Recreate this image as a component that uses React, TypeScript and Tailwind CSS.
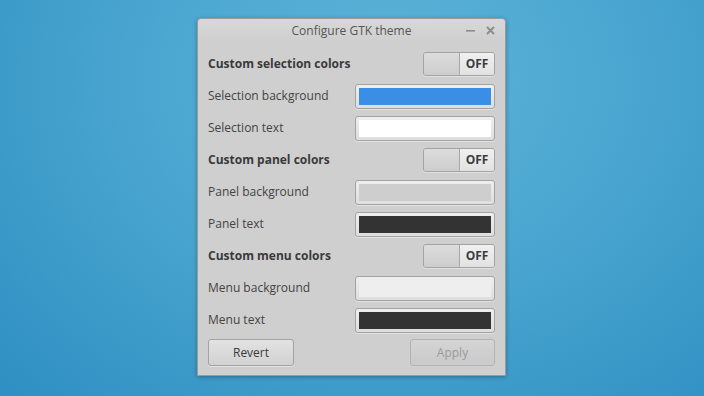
import React from "react";

type Row =
  | { kind: "toggle"; label: string }
  | { kind: "color"; label: string; color: string };

const rows: Row[] = [
  { kind: "toggle", label: "Custom selection colors" },
  { kind: "color", label: "Selection background", color: "bg-[#3a8ee6]" },
  { kind: "color", label: "Selection text", color: "bg-white" },
  { kind: "toggle", label: "Custom panel colors" },
  { kind: "color", label: "Panel background", color: "bg-[#cecece]" },
  { kind: "color", label: "Panel text", color: "bg-[#333333]" },
  { kind: "toggle", label: "Custom menu colors" },
  { kind: "color", label: "Menu background", color: "bg-[#eeeeee]" },
  { kind: "color", label: "Menu text", color: "bg-[#333333]" },
];

function Toggle() {
  return (
    <div className="flex h-6 w-[72px] overflow-hidden rounded-[3px] border border-[#a3a3a3] shadow-[0_1px_0_rgba(255,255,255,0.4)]">
      <div className="w-[36px] border-r border-[#a8a8a8] bg-gradient-to-b from-[#dcdcdc] to-[#cdcdcd]" />
      <div className="flex flex-1 items-center justify-center bg-gradient-to-b from-[#f0f0f0] to-[#e2e2e2] text-[12px] font-bold text-[#3c3c3c]">
        OFF
      </div>
    </div>
  );
}

function ColorButton({ color }: { color: string }) {
  return (
    <div className="h-[25px] w-[140px] rounded-[3px] border border-[#a3a3a3] bg-gradient-to-b from-[#eeeeee] to-[#dedede] p-[3px] shadow-[0_1px_0_rgba(255,255,255,0.4)]">
      <div className={`h-full w-full ${color}`} />
    </div>
  );
}

export default function App() {
  return (
    <div
      className="flex h-[396px] w-[704px] items-start justify-center bg-[radial-gradient(ellipse_at_55%_20%,#5db3d8_0%,#4aa6d0_45%,#2f8fc2_100%)] pt-[18px]"
      style={{ fontFamily: '"Open Sans", "Noto Sans", sans-serif' }}
    >
      <div className="ml-[-1px] flex h-[358px] w-[309px] flex-col rounded-t-[4px] border border-[#9a9a9a] bg-[#cfcfcf] shadow-[0_1px_4px_rgba(0,0,0,0.3)]">
        <div className="relative flex h-[23px] items-center justify-center rounded-t-[4px] bg-gradient-to-b from-[#d8d8d8] to-[#cfcfcf]">
          <span className="pt-[1px] text-[12px] text-[#555555]">Configure GTK theme</span>
          <div className="absolute right-[10px] top-[7px] flex items-center gap-[11px]">
            <svg width="9" height="9" viewBox="0 0 9 9">
              <rect x="0" y="4" width="9" height="1.6" fill="#8c8c8c" />
            </svg>
            <svg width="9" height="9" viewBox="0 0 9 9">
              <path d="M1 1 L8 8 M8 1 L1 8" stroke="#8c8c8c" strokeWidth="1.8" />
            </svg>
          </div>
        </div>
        <div className="flex flex-col pl-[10px] pr-[10px] pt-[6px]">
          {rows.map((r) => (
            <div key={r.label} className="flex h-8 items-center justify-between">
              {r.kind === "toggle" ? (
                <>
                  <span className="text-[12px] font-bold text-[#3a3a3a]">{r.label}</span>
                  <Toggle />
                </>
              ) : (
                <>
                  <span className="text-[12px] text-[#444444]">{r.label}</span>
                  <ColorButton color={r.color} />
                </>
              )}
            </div>
          ))}
          <div className="mt-[3px] flex items-center justify-between">
            <button className="h-[27px] w-[86px] rounded-[3px] border border-[#a3a3a3] bg-gradient-to-b from-[#e2e2e2] to-[#d2d2d2] text-[12px] text-[#3a3a3a] shadow-[0_1px_0_rgba(255,255,255,0.4)]">
              Revert
            </button>
            <button className="h-[27px] w-[85px] rounded-[3px] border border-[#b3b3b3] bg-gradient-to-b from-[#d4d4d4] to-[#cacaca] text-[12px] text-[#9a9a9a]">
              Apply
            </button>
          </div>
        </div>
      </div>
    </div>
  );
}
